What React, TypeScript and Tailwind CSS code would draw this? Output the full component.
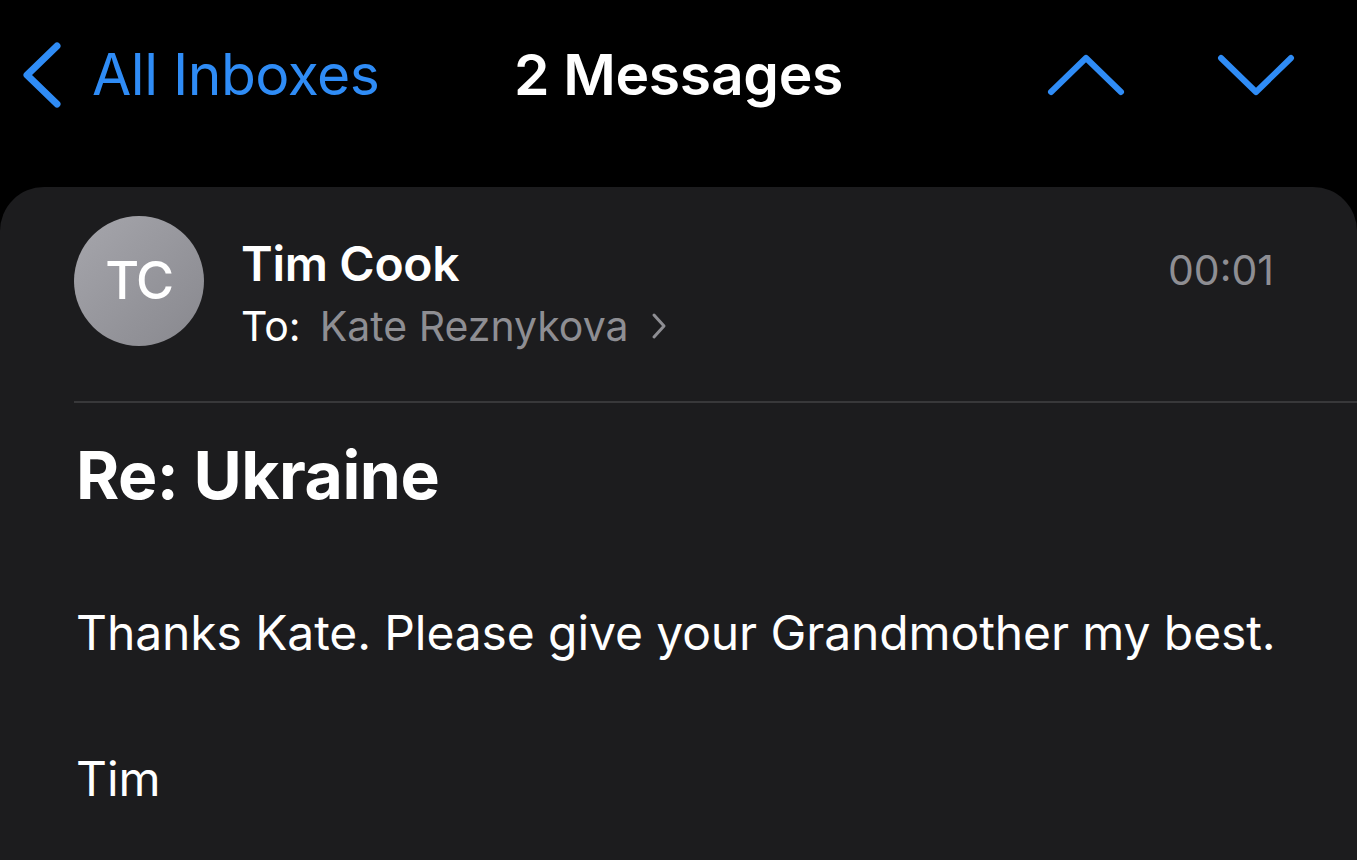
export default function App() {
  return (
    <div className="min-h-screen bg-black text-white font-['Inter','Liberation_Sans',sans-serif] overflow-hidden">
      <header className="grid grid-cols-[1fr_auto_1fr] items-center h-[150px] px-[22px]">
        <div className="flex items-center gap-[30px] text-[#2f8cf6]">
          <svg width="40" height="66" viewBox="0 0 40 66" fill="none">
            <polyline
              points="35,4 5,33 35,62"
              stroke="currentColor"
              strokeWidth="7"
              strokeLinecap="round"
              strokeLinejoin="round"
            />
          </svg>
          <span className="text-[57px] leading-[70px] tracking-[-0.5px]">All Inboxes</span>
        </div>
        <h1 className="text-[57px] leading-[70px] font-semibold tracking-[-0.3px]">2 Messages</h1>
        <div className="flex items-center justify-end gap-[92px] mr-[40px] text-[#2f8cf6]">
          <svg width="78" height="44" viewBox="0 0 78 44" fill="none">
            <polyline
              points="4,39 39,5 74,39"
              stroke="currentColor"
              strokeWidth="6"
              strokeLinecap="round"
              strokeLinejoin="round"
            />
          </svg>
          <svg width="78" height="44" viewBox="0 0 78 44" fill="none">
            <polyline
              points="4,5 39,39 74,5"
              stroke="currentColor"
              strokeWidth="6"
              strokeLinecap="round"
              strokeLinejoin="round"
            />
          </svg>
        </div>
      </header>

      <main className="mt-[37px] rounded-t-[44px] bg-[#1c1c1e] min-h-[700px]">
        <div className="flex items-start h-[159px] pt-[29px] pl-[74px] pr-[83px]">
          <div className="w-[130px] h-[130px] shrink-0 rounded-full bg-gradient-to-br from-[#a6a6ac] to-[#88888e] flex items-center justify-center">
            <span className="text-[52px] font-medium tracking-[-1.5px]">TC</span>
          </div>
          <div className="ml-[37px] flex flex-col">
            <span className="mt-[19px] text-[48px] leading-[58px] font-semibold tracking-[-0.3px]">Tim Cook</span>
            <div className="mt-[9px] flex items-center text-[41px] leading-[48px]">
              <span>To:</span>
              <span className="ml-[19px] text-[#8e8e93]">Kate Reznykova</span>
              <svg className="ml-[22px]" width="16" height="28" viewBox="0 0 16 28" fill="none">
                <polyline
                  points="3,3 13,14 3,25"
                  stroke="#8e8e93"
                  strokeWidth="3"
                  strokeLinecap="round"
                  strokeLinejoin="round"
                />
              </svg>
            </div>
          </div>
          <span className="ml-auto mt-[29px] text-[41px] leading-[50px] text-[#8e8e93]">00:01</span>
        </div>

        <div className="ml-[74px] mt-[55px] h-[2px] bg-[#38383a]" />

        <div className="pl-[76px] pr-[40px]">
          <h2 className="mt-[32px] text-[66px] leading-[80px] font-bold tracking-[-0.5px]">Re: Ukraine</h2>
          <p className="mt-[88px] text-[48px] leading-[60px] whitespace-nowrap tracking-[-0.1px]">
            Thanks Kate. Please give your Grandmother my best.
          </p>
          <p className="mt-[86px] text-[48px] leading-[60px]">Tim</p>
        </div>
      </main>
    </div>
  );
}
